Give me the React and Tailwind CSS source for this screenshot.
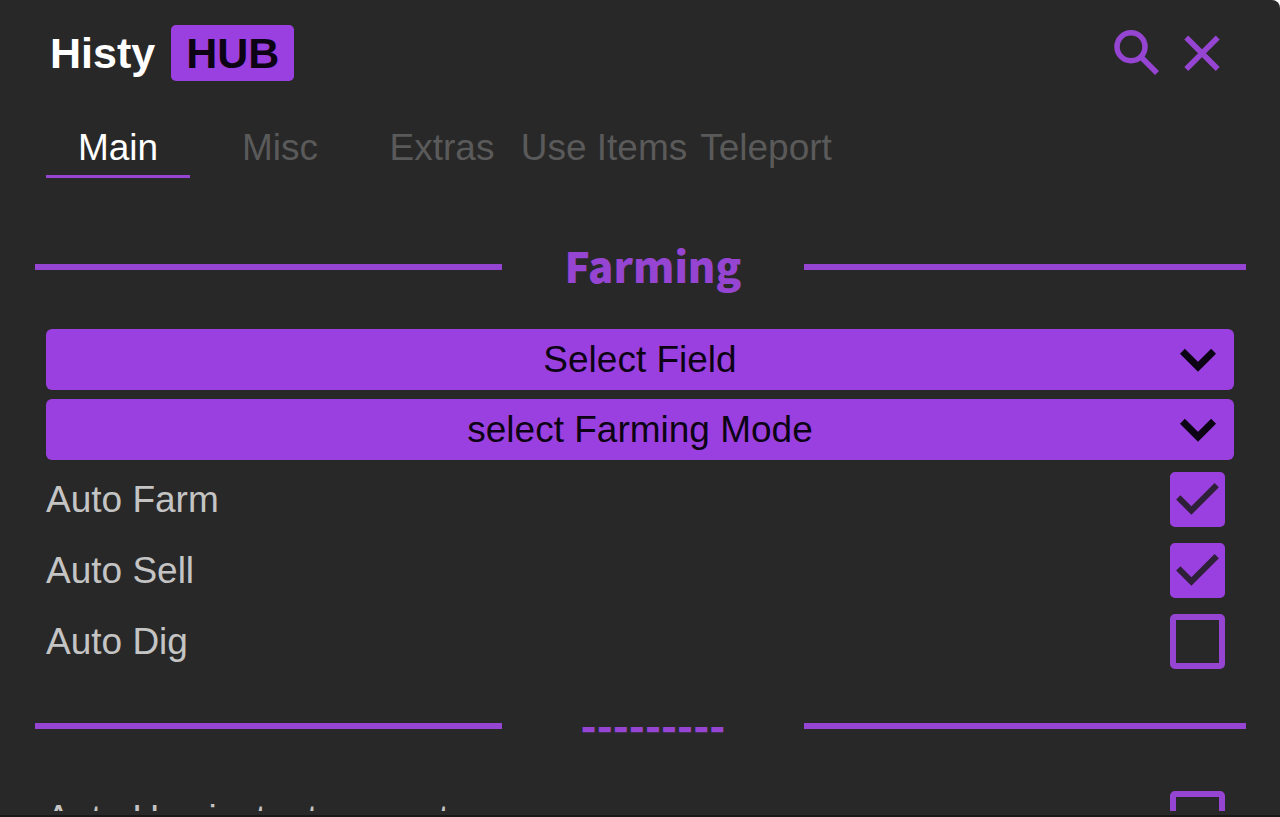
const tabs = ["Main", "Misc", "Extras", "Use Items", "Teleport"];

const selects = ["Select Field", "select Farming Mode"];

const farmToggles = [
  { id: "auto-farm", label: "Auto Farm", on: true },
  { id: "auto-sell", label: "Auto Sell", on: true },
  { id: "auto-dig", label: "Auto Dig", on: false },
];

function Divider({ children }) {
  return (
    <div className="flex items-center pl-[35px] pr-[34px]">
      <span className="h-[6px] flex-[467] bg-[#9645d2]" />
      <h2 className="flex h-[64px] flex-[303] items-center justify-center pb-1 font-['Noto_Sans_CJK_SC',sans-serif] text-[42px] leading-[60px] font-black text-[#9645d2]">
        {children}
      </h2>
      <span className="h-[6px] flex-[442] bg-[#9645d2]" />
    </div>
  );
}

function SelectBox({ label }) {
  return (
    <div className="relative">
      <select
        aria-label={label}
        className="block h-[61px] w-full appearance-none rounded-md bg-[#9b40e0] text-center text-[37px] leading-[61px] text-[#0c0414] [text-align-last:center]"
      >
        <option>{label}</option>
      </select>
      <svg
        viewBox="0 0 24 24"
        className="pointer-events-none absolute -top-[6px] right-0 size-[72px] fill-none stroke-[#0c0414]"
        strokeWidth="2.3"
      >
        <path d="M6.8 9.4 12 14.6l5.2-5.2" />
      </svg>
    </div>
  );
}

function Toggle({ id, label, on }) {
  return (
    <div className="flex h-[71px] items-center justify-between pr-[9px]">
      <label htmlFor={id} className="text-[37px] leading-[42px] whitespace-nowrap text-[#c4c4c4]">
        {label}
      </label>
      <div className="relative size-[55px] shrink-0">
        <input
          id={id}
          type="checkbox"
          defaultChecked={on}
          className="peer block size-[55px] appearance-none rounded-[5px] border-[6px] border-[#9645d2] checked:border-[#9b40e0] checked:bg-[#9b40e0]"
        />
        <svg
          viewBox="3 3 18 18"
          className="pointer-events-none absolute inset-0 hidden size-full fill-[#2d2038] peer-checked:block"
        >
          <path d="M10 17l-5-5 1.41-1.41L10 14.17l7.59-7.59L19 8l-9 9z" />
        </svg>
      </div>
    </div>
  );
}

export default function App() {
  return (
    <div className="bg-white">
      <div className="h-screen overflow-hidden rounded-tr-lg border-b-2 border-[#181818] bg-[#282828] pb-1 font-['Liberation_Sans',sans-serif]">
        <div className="h-full overflow-hidden">
          <header className="flex items-center justify-between pt-[23px] pr-12 pl-[50px]">
            <h1 className="flex items-center gap-4 text-[43px] leading-[56px] font-bold text-white">
              Histy
              <span className="rounded-[5px] bg-[#9b40e0] px-[15px] text-[#0c0414]">HUB</span>
            </h1>
            <div className="flex gap-[5px]">
              <button aria-label="Search">
                <svg viewBox="0 0 24 24" className="size-[60px] fill-none stroke-[#9645d2]" strokeWidth="2.2">
                  <circle cx="9.6" cy="9.5" r="5.6" />
                  <path d="M13.6 13.6l6.4 6.4" />
                </svg>
              </button>
              <button aria-label="Close">
                <svg viewBox="0 0 24 24" className="size-[60px] fill-none stroke-[#9645d2]" strokeWidth="2.2">
                  <path d="M5.7 5.8l12.6 12.6M18.3 5.8 5.7 18.4" />
                </svg>
              </button>
            </div>
          </header>

          <nav className="mt-[34px] flex gap-[18px] pl-[46px]">
            {tabs.map((tab, i) => (
              <button
                key={tab}
                className={`flex h-[61px] w-36 shrink-0 justify-center border-b-[3px] text-[37px] leading-[62px] whitespace-nowrap ${
                  i === 0 ? "border-[#9645d2] text-white" : "border-transparent text-[#5a5a5a]"
                }`}
              >
                {tab}
              </button>
            ))}
          </nav>

          <main className="pt-[57px]">
            <Divider>Farming</Divider>
            <div className="mt-[30px] flex flex-col gap-[9px] px-[46px]">
              {selects.map((label) => (
                <SelectBox key={label} label={label} />
              ))}
            </div>
            <div className="mt-1 mb-[17px] px-[46px]">
              {farmToggles.map((item) => (
                <Toggle key={item.id} {...item} />
              ))}
            </div>
            <Divider>---------</Divider>
            <div className="mt-[25px] px-[46px]">
              <Toggle id="auto-convert" label="Auto Use instant convert" on={false} />
            </div>
          </main>
        </div>
      </div>
    </div>
  );
}
